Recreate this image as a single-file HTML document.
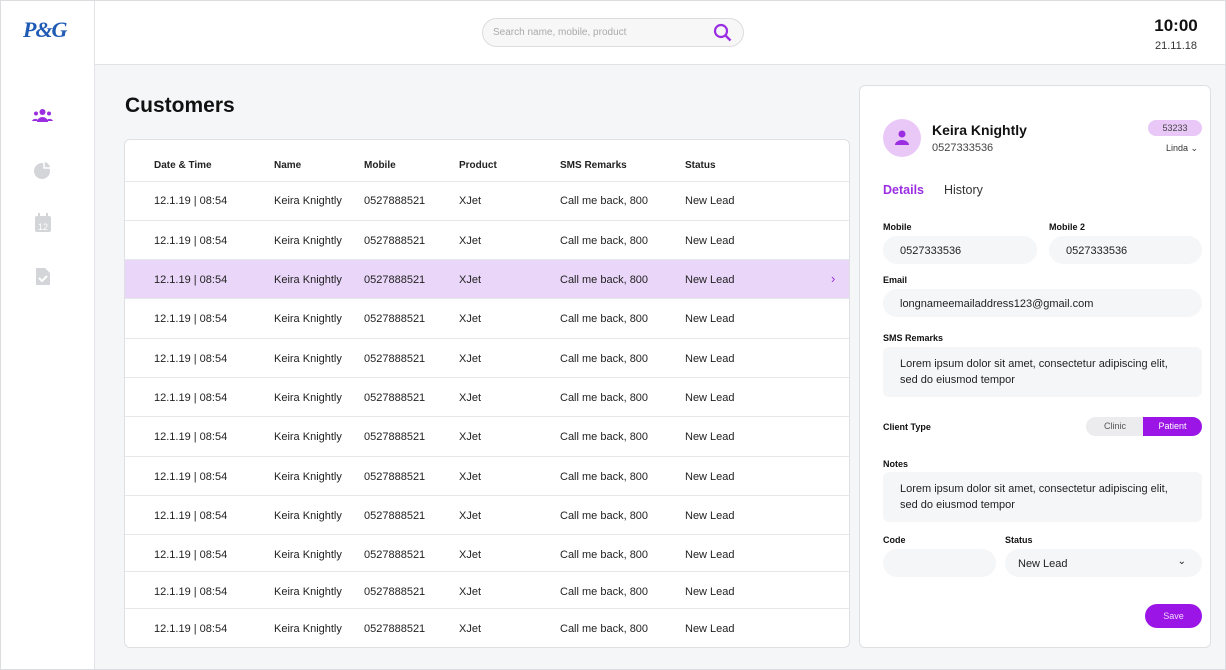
<!DOCTYPE html>
<html><head><meta charset="utf-8"><style>
*{box-sizing:border-box;margin:0;padding:0}
body{width:1226px;height:670px;overflow:hidden;background:#f5f6f7;font-family:"Liberation Sans",sans-serif;color:#222;position:relative}
.frame{position:absolute;inset:0;border:1px solid #dcdde0;pointer-events:none;z-index:10}
.side{position:absolute;left:0;top:0;width:95px;height:670px;background:#fff;border-right:1px solid #e2e3e6}
.top{position:absolute;left:95px;top:0;right:0;height:65px;background:#fff;border-bottom:1px solid #e2e3e6}
.logo{position:absolute;left:23px;top:17px;font:italic bold 22px "Liberation Serif",serif;color:#1f5bb5;letter-spacing:-1px}
.search{position:absolute;left:482px;top:18px;width:262px;height:29px;border:1px solid #dcdde0;border-radius:15px;background:#f7f7f8;font-size:10px;color:#aaa;padding:8px 10px}
.time{position:absolute;right:20px;top:16px;text-align:center;width:60px}
.time b{display:block;font-size:17px;color:#111}
.time span{font-size:11px;color:#333}
h1{position:absolute;left:125px;top:94px;font-size:21px;font-weight:bold;color:#111}
.card{position:absolute;left:124px;top:139px;width:726px;height:509px;background:#fff;border:1px solid #dfe0e3;border-radius:6px;overflow:hidden}
.row{position:absolute;left:0;width:100%;height:40px;border-bottom:1px solid #e6e7ea;font-size:11px;color:#222}
.row span{position:absolute;top:14px}
.hd{font-weight:bold;font-size:10px}
.hd span{top:20px}
.sel{background:#e9d6f8}
.c1{left:29px}.c2{left:149px}.c3{left:239px}.c4{left:334px}.c5{left:435px}.c6{left:560px}
.panel{position:absolute;left:859px;top:85px;width:352px;height:563px;background:#fff;border:1px solid #dfe0e3;border-radius:6px}
.p{position:absolute}
.lbl{font-size:9px;font-weight:bold;color:#111}
.in{background:#f5f6f7;border-radius:14px;font-size:11px;color:#222;padding:9px 17px}
</style></head><body>
<div class="frame"></div>
<div class="side">
<div class="logo">P&amp;G</div>
<svg style="position:absolute;left:32px;top:108px" width="21" height="16" viewBox="0 0 21 16" fill="#9b2ee0"><circle cx="10.5" cy="4" r="3"/><circle cx="4" cy="5.5" r="2"/><circle cx="17" cy="5.5" r="2"/><path d="M5 14a5.5 5 0 0111 0z"/><path d="M0 13a3.5 3 0 016 -1v1z"/><path d="M21 13a3.5 3 0 00-6 -1v1z"/></svg>
<svg style="position:absolute;left:33px;top:160px" width="20" height="20" viewBox="0 0 20 20"><circle cx="9" cy="11" r="8" fill="#d4d5d9"/><path d="M11 1a8 8 0 017 7h-7z" fill="#d4d5d9" stroke="#fff" stroke-width="1.5"/></svg>
<svg style="position:absolute;left:34px;top:213px" width="18" height="20" viewBox="0 0 18 20"><rect x="1" y="3" width="16" height="16" rx="2" fill="#d4d5d9"/><rect x="4" y="0" width="2" height="5" fill="#d4d5d9"/><rect x="12" y="0" width="2" height="5" fill="#d4d5d9"/><text x="9" y="17" font-size="9" text-anchor="middle" fill="#fff" font-family="Liberation Sans">12</text></svg>
<svg style="position:absolute;left:35px;top:267px" width="16" height="19" viewBox="0 0 16 19"><path d="M1 1h9l5 5v12H1z" fill="#d4d5d9"/><path d="M4 11l3 3 5-5" stroke="#fff" stroke-width="2" fill="none"/></svg>
</div>
<div class="top"></div>
<div class="search">Search name, mobile, product
<svg style="position:absolute;right:10px;top:4px" width="20" height="20" viewBox="0 0 20 20"><circle cx="8" cy="8" r="6" stroke="#9b2ee0" stroke-width="2.2" fill="none"/><path d="M12.5 12.5l5 5" stroke="#9b2ee0" stroke-width="2.4"/></svg></div>
<div class="time"><b>10:00</b><span>21.11.18</span></div>
<h1>Customers</h1>
<div class="card">
<div class="row hd" style="top:0;height:42px"><span class="c1">Date &amp; Time</span><span class="c2">Name</span><span class="c3">Mobile</span><span class="c4">Product</span><span class="c5">SMS Remarks</span><span class="c6">Status</span></div>
<div id="rows"></div>
</div>
<script>
var h='',tops=[41,81,120,159,199,238,277,317,356,395,432,469];
for(var i=0;i<12;i++){h+='<div class="row'+(i==2?' sel':'')+'" style="top:'+tops[i]+'px;height:'+((tops[i+1]||508)-tops[i])+'px"><span class="c1">12.1.19 | 08:54</span><span class="c2">Keira Knightly</span><span class="c3">0527888521</span><span class="c4">XJet</span><span class="c5">Call me back, 800</span><span class="c6">New Lead</span>'+(i==2?'<span style="left:706px;top:11px;color:#9b2ee0;font-size:13px">›</span>':'')+'</div>';}
document.getElementById('rows').innerHTML=h;
</script>
<div class="panel">
<div class="p" style="left:23px;top:33px;width:38px;height:38px;border-radius:50%;background:#e9c8f8"><svg style="position:absolute;left:11px;top:10px" width="16" height="17" viewBox="0 0 16 17" fill="#9b2ee0"><circle cx="8" cy="5" r="3.5"/><path d="M1 16a7 5 0 0114 0z"/></svg></div>
<div class="p" style="left:72px;top:36px;font-size:14px;font-weight:bold;color:#111">Keira Knightly</div>
<div class="p" style="left:72px;top:56px;font-size:11px;color:#444">0527333536</div>
<div class="p" style="left:288px;top:34px;width:54px;height:16px;border-radius:8px;background:#e9c8f8;font-size:9px;text-align:center;line-height:16px;color:#444">53233</div>
<div class="p" style="left:306px;top:57px;font-size:9px;color:#333">Linda ⌄</div>
<div class="p" style="left:23px;top:97px;font-size:12.5px;font-weight:bold;color:#9b2ee0">Details</div>
<div class="p" style="left:84px;top:97px;font-size:12.5px;color:#333">History</div>
<div class="p lbl" style="left:23px;top:136px">Mobile</div>
<div class="p lbl" style="left:189px;top:136px">Mobile 2</div>
<div class="p in" style="left:23px;top:150px;width:154px;height:28px">0527333536</div>
<div class="p in" style="left:189px;top:150px;width:153px;height:28px">0527333536</div>
<div class="p lbl" style="left:23px;top:189px">Email</div>
<div class="p in" style="left:23px;top:203px;width:319px;height:28px">longnameemailaddress123@gmail.com</div>
<div class="p lbl" style="left:23px;top:247px">SMS Remarks</div>
<div class="p in" style="left:23px;top:261px;width:319px;height:50px;border-radius:6px;line-height:16px">Lorem ipsum dolor sit amet, consectetur adipiscing elit, sed do eiusmod tempor</div>
<div class="p lbl" style="left:23px;top:336px">Client Type</div>
<div class="p" style="left:226px;top:331px;width:116px;height:19px;border-radius:10px;background:#ececee;overflow:hidden;font-size:9px"><span style="position:absolute;left:0;width:58px;text-align:center;line-height:19px;color:#555">Clinic</span><span style="position:absolute;left:57px;width:59px;height:19px;background:#9b16e6;color:#fff;text-align:center;line-height:19px">Patient</span></div>
<div class="p lbl" style="left:23px;top:373px">Notes</div>
<div class="p in" style="left:23px;top:386px;width:319px;height:50px;border-radius:6px;line-height:16px">Lorem ipsum dolor sit amet, consectetur adipiscing elit, sed do eiusmod tempor</div>
<div class="p lbl" style="left:23px;top:449px">Code</div>
<div class="p lbl" style="left:145px;top:449px">Status</div>
<div class="p in" style="left:23px;top:463px;width:113px;height:28px"></div>
<div class="p in" style="left:145px;top:463px;width:197px;height:28px;padding-left:13px">New Lead<span style="position:absolute;right:16px;top:7px;font-size:10px">⌄</span></div>
<div class="p" style="left:285px;top:518px;width:57px;height:24px;border-radius:12px;background:#9b16e6;color:#f0d8ff;font-size:9px;text-align:center;line-height:24px">Save</div>
</div>
</body></html>
